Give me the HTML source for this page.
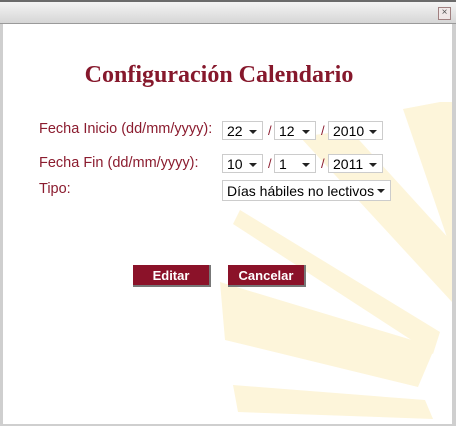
<!DOCTYPE html>
<html><head><style>
body{margin:0;width:456px;height:426px;overflow:hidden;background:#d4d4d4;font-family:"Liberation Sans",Arial,sans-serif}
.frame{position:absolute;left:0;top:0;width:456px;height:426px;background:#cfcfcf;border-top:2px solid #6b6b6b;box-sizing:border-box}
.bar{position:absolute;left:0;top:0;width:456px;height:21px;background:linear-gradient(#f4f4f4,#d6d6d6);border-bottom:1px solid #9a9a9a}
.close{position:absolute;left:438px;top:5px;width:11px;height:11px;border:1px solid #a08080;background:#f0e8e8;font-size:10px;line-height:10px;text-align:center;color:#555}
.content{position:absolute;left:3px;top:22px;width:449px;height:400px;background:#fff;overflow:hidden}
h1{position:absolute;left:0;width:432px;top:38px;margin:0;text-align:center;font-family:"Liberation Serif",serif;font-size:24px;color:#86182c;font-weight:bold;white-space:nowrap}
.lbl{position:absolute;left:36px;font-size:14.5px;color:#8b1c2f}
.sel{position:absolute;height:19px;border:1px solid #ccc;background:#fff;font-size:14px;color:#000;line-height:19px;padding-left:4px;box-sizing:border-box}
.sel:after{content:"";position:absolute;right:5px;top:8px;border-left:4px solid transparent;border-right:4px solid transparent;border-top:4px solid #222}
.sl{position:absolute;font-size:13px;color:#8b1c2f}
.btn{position:absolute;top:241px;height:22px;width:78px;background:#8b1229;color:#fff;font-weight:bold;font-size:13px;text-align:center;line-height:22px;border-right:2px solid #777;border-bottom:2px solid #777;box-sizing:border-box}
</style></head><body>
<div class="frame">
<div class="bar"><div class="close">×</div></div>
<div class="content">
<svg width="449" height="400" style="position:absolute;left:0;top:0" fill="#fdf5da">
<polygon points="400,85 437,78 449,78 449,228"/>
<polygon points="297,113 347,106 449,218 449,278"/>
<polygon points="230,200 237,186 437,308 430,330"/>
<polygon points="217,258 222,316 415,363 432,323"/>
<polygon points="230,361 235,388 430,395 422,376"/>
</svg>
<h1>Configuración Calendario</h1>
<div class="lbl" style="top:97px">Fecha Inicio (dd/mm/yyyy):</div>
<div class="lbl" style="top:131px">Fecha Fin (dd/mm/yyyy):</div>
<div class="lbl" style="top:157px">Tipo:</div>
<div class="sel" style="left:219px;top:97px;width:41px">22</div>
<div class="sl" style="left:265px;top:99px">/</div>
<div class="sel" style="left:271px;top:97px;width:42px">12</div>
<div class="sl" style="left:318px;top:99px">/</div>
<div class="sel" style="left:325px;top:97px;width:55px">2010</div>
<div class="sel" style="left:219px;top:130px;width:41px">10</div>
<div class="sl" style="left:265px;top:132px">/</div>
<div class="sel" style="left:271px;top:130px;width:42px">1</div>
<div class="sl" style="left:318px;top:132px">/</div>
<div class="sel" style="left:325px;top:130px;width:55px">2011</div>
<div class="sel" style="left:219px;top:156px;width:169px;height:21px;line-height:21px">Días hábiles no lectivos</div>
<div class="btn" style="left:130px">Editar</div>
<div class="btn" style="left:225px">Cancelar</div>
</div>
</div>
</body></html>
